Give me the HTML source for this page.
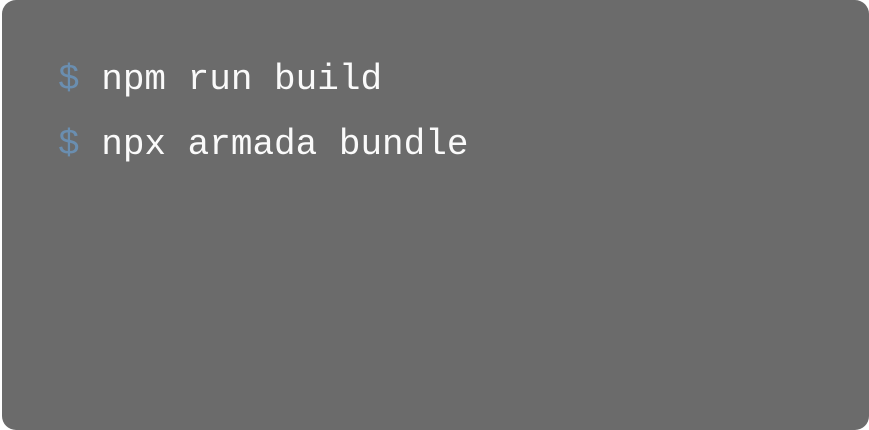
<!DOCTYPE html>
<html><head><style>
html,body{margin:0;padding:0;background:#fff;}
.box{position:absolute;left:2px;top:0;width:867px;height:430px;background:#6b6b6b;border-radius:14px;}
.l{position:absolute;left:56px;font-family:"Liberation Mono",monospace;font-size:36px;color:#fafafa;white-space:pre;line-height:1;}
.d{color:#6a8eb0;}
</style></head><body>
<div class="box">
<div class="l" style="top:62px"><span class="d">$</span> npm run build</div>
<div class="l" style="top:127px"><span class="d">$</span> npx armada bundle</div>
</div>
</body></html>
